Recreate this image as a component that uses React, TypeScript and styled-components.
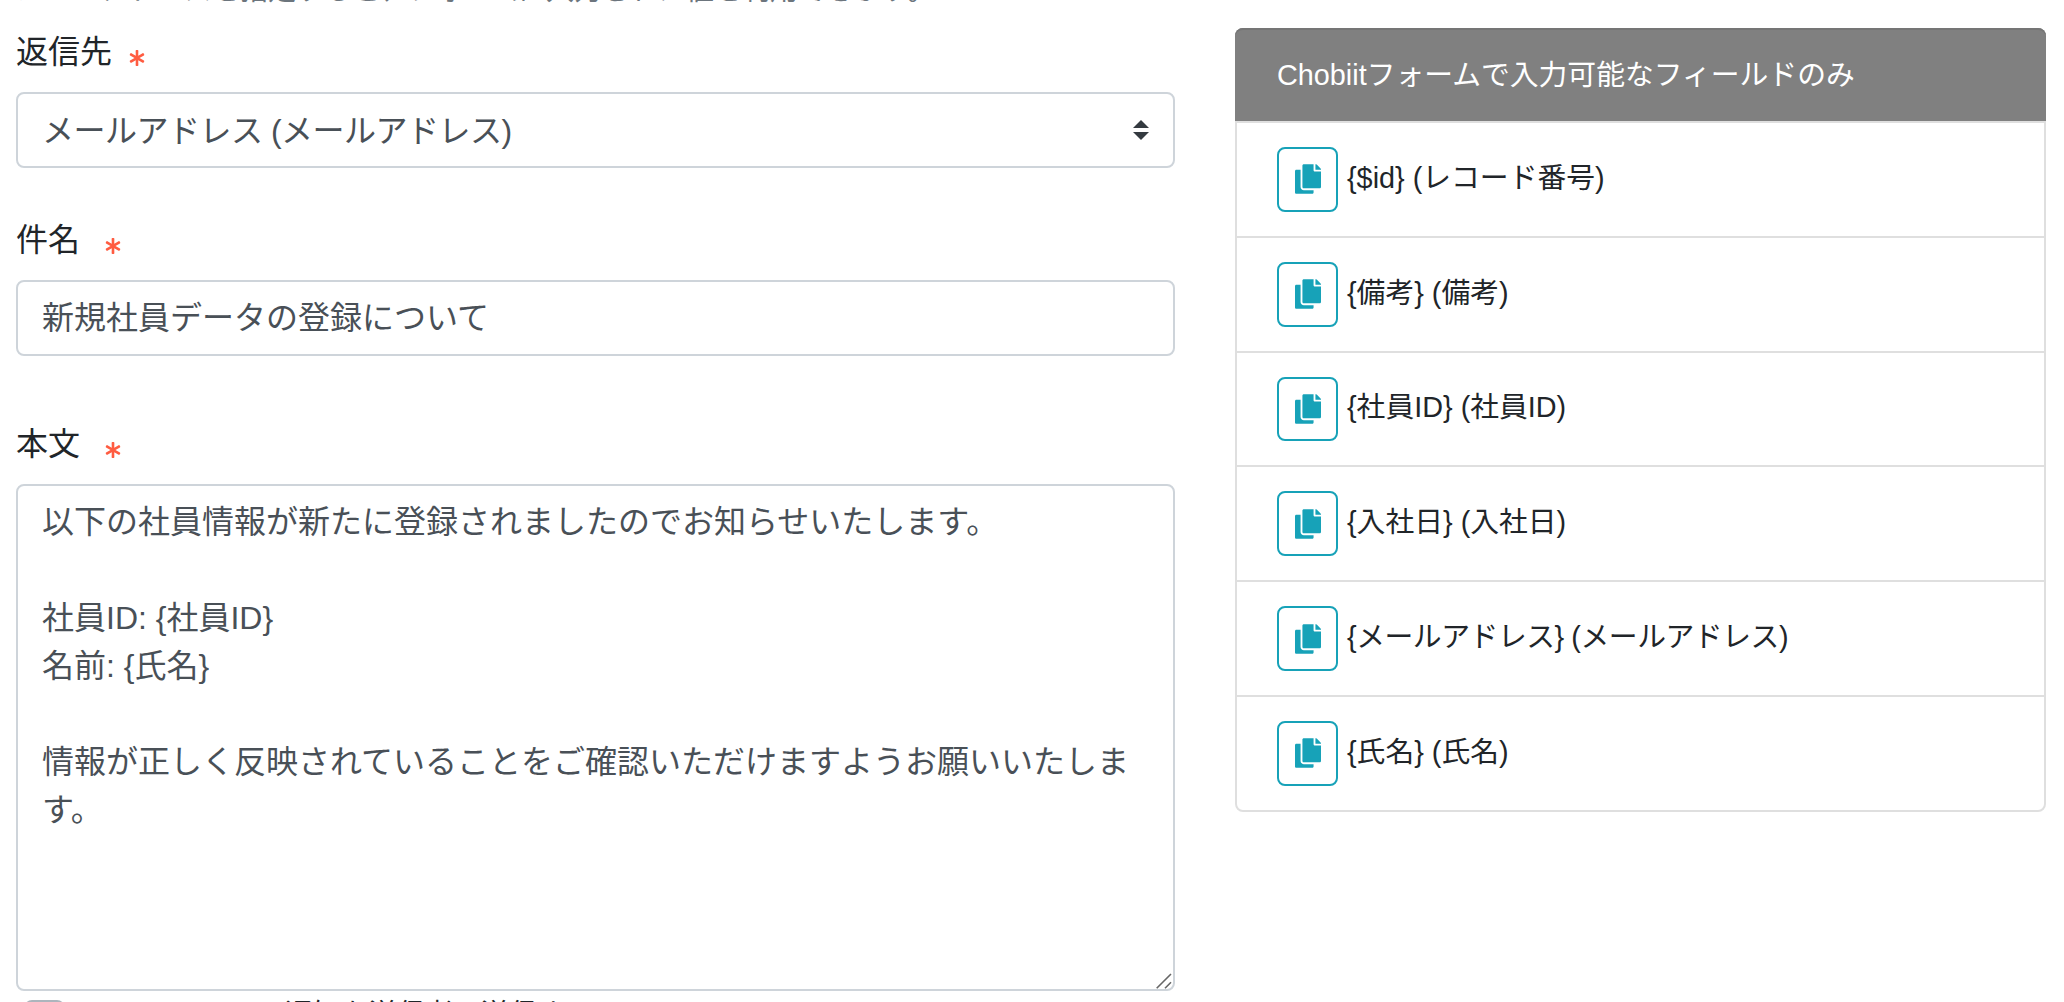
import React from 'react';
import styled, { createGlobalStyle } from 'styled-components';
import { FaAsterisk, FaCopy } from 'react-icons/fa';

const FONT = '"Liberation Sans", "Noto Sans CJK JP", sans-serif';
const SELECT_ARROWS =
  "url(\"data:image/svg+xml,%3csvg xmlns='http://www.w3.org/2000/svg' viewBox='0 0 4 5'%3e%3cpath fill='%23343a40' d='M2 0L0 2h4zm0 5L0 3h4z'/%3e%3c/svg%3e\")";

const BODY_TEXT = `以下の社員情報が新たに登録されましたのでお知らせいたします。

社員ID: {社員ID}
名前: {氏名}

情報が正しく反映されていることをご確認いただけますようお願いいたします。`;

const FIELDS = [
  { text: '{$id} (レコード番号)', tight: false },
  { text: '{備考} (備考)', tight: false },
  { text: '{社員ID} (社員ID)', tight: false },
  { text: '{入社日} (入社日)', tight: false },
  { text: '{メールアドレス} (メールアドレス)', tight: true },
  { text: '{氏名} (氏名)', tight: false },
];

const GlobalStyle = createGlobalStyle`
  html, body {
    margin: 0;
    height: 100%;
    overflow: hidden;
    background: #fff;
  }
  body {
    font-family: ${FONT};
    color: #212529;
  }
  * {
    box-sizing: border-box;
  }
`;

const Page = styled.div`
  display: grid;
  grid-template-columns: 1159px 811px;
  column-gap: 60px;
  align-items: start;
  height: 1002px;
  padding: 0 18px 0 16px;
  overflow: hidden;
`;

const FormColumn = styled.div`
  display: flex;
  flex-direction: column;
  margin-top: -30px;
`;

const Hint = styled.p`
  margin: 0 0 16px;
  font-size: 28px;
  line-height: 42px;
  color: #6c757d;
`;

const Label = styled.label<{ $gap: number }>`
  display: flex;
  height: 48px;
  margin-bottom: 16px;
  font-size: 32px;
  line-height: 48px;
  color: #212529;

  svg {
    margin: 22px 0 0 ${(p) => p.$gap}px;
    width: 16px;
    height: 16px;
    color: #ff5c41;
  }
`;

const Select = styled.select<{ $after: number }>`
  display: block;
  width: 100%;
  height: 76px;
  margin-bottom: ${(p) => p.$after}px;
  padding: 13px 64px 11px 24px;
  border: 2px solid #ced4da;
  border-radius: 8px;
  appearance: none;
  background: #fff ${SELECT_ARROWS} no-repeat right 24px center / 16px 20px;
  font-family: ${FONT};
  font-size: 32px;
  line-height: 48px;
  letter-spacing: -0.5px;
  color: #495057;
`;

const TextInput = styled.input<{ $after: number }>`
  display: block;
  width: 100%;
  height: 76px;
  margin-bottom: ${(p) => p.$after}px;
  padding: 9px 24px 15px;
  border: 2px solid #ced4da;
  border-radius: 8px;
  font-family: ${FONT};
  font-size: 32px;
  line-height: 48px;
  color: #495057;
`;

const AreaWrap = styled.div`
  position: relative;
  height: 507px;
`;

const BodyArea = styled.textarea`
  display: block;
  width: 100%;
  height: 100%;
  padding: 12px 24px;
  border: 2px solid #ced4da;
  border-radius: 8px;
  resize: none;
  font-family: ${FONT};
  font-size: 32px;
  line-height: 48px;
  color: #495057;
`;

const ResizeGrip = styled.svg`
  position: absolute;
  right: 0;
  bottom: 0;
  width: 20px;
  height: 20px;
  pointer-events: none;
`;

const OptionRow = styled.div`
  display: flex;
  align-items: flex-start;
  margin: 9px 0 0 8px;
`;

const SwitchTrack = styled.span`
  flex: none;
  width: 41px;
  height: 24px;
  border-radius: 8px;
  background: #adb5bd;
`;

const OptionText = styled.span`
  margin: 1px 0 0 220px;
  font-size: 28px;
  line-height: 28px;
  color: #212529;
`;

const Card = styled.section`
  margin-top: 28px;
  border: 2px solid #dfdfdf;
  border-radius: 8px;
  background: #fff;
`;

const CardHeader = styled.header`
  margin: -2px -2px 0;
  padding: 26px 42px 23.8px;
  border-radius: 8px 8px 0 0;
  background: #808080;
  box-shadow: inset 0 2px 0 #757575;
  font-size: 28.8px;
  line-height: 43.2px;
  color: #fff;
`;

const FieldRow = styled.div`
  display: flex;
  align-items: center;
  gap: 9px;
  padding: 24px 40px;
  border-top: 2px solid #dfdfdf;
`;

const FieldName = styled.span<{ $tight: boolean }>`
  margin-bottom: 2px;
  font-size: 28.8px;
  line-height: 43.2px;
  letter-spacing: ${(p) => (p.$tight ? '-0.45px' : '0')};
  color: #212529;
`;

const CopyButton = styled.button`
  flex: none;
  display: flex;
  align-items: center;
  justify-content: center;
  width: 61px;
  height: 64.8px;
  padding: 0;
  border: 2px solid #17a2b8;
  border-radius: 8px;
  background: #fff;
  color: #17a2b8;

  svg {
    width: 26px;
    height: 30px;
  }
`;

export default function App() {
  return (
    <>
      <GlobalStyle />
      <Page>
        <FormColumn>
          <Hint>メールアドレスを指定すると、フォームに入力された値を利用できます。</Hint>

          <Label $gap={17}>
            返信先
            <FaAsterisk />
          </Label>
          <Select $after={48} defaultValue="email">
            <option value="email">メールアドレス (メールアドレス)</option>
          </Select>

          <Label $gap={25}>
            件名
            <FaAsterisk />
          </Label>
          <TextInput $after={64} defaultValue="新規社員データの登録について" />

          <Label $gap={25}>
            本文
            <FaAsterisk />
          </Label>
          <AreaWrap>
            <BodyArea defaultValue={BODY_TEXT} />
            <ResizeGrip viewBox="0 0 20 20" aria-hidden="true">
              <path d="M1.7 17.3L16 3M10 17.3l6-6" stroke="#666" strokeWidth="1.6" fill="none" />
            </ResizeGrip>
          </AreaWrap>

          <OptionRow>
            <SwitchTrack />
            <OptionText>通知を送信者へ送信する</OptionText>
          </OptionRow>
        </FormColumn>

        <Card>
          <CardHeader>Chobiitフォームで入力可能なフィールドのみ</CardHeader>
          {FIELDS.map((field) => (
            <FieldRow key={field.text}>
              <CopyButton type="button">
                <FaCopy />
              </CopyButton>
              <FieldName $tight={field.tight}>{field.text}</FieldName>
            </FieldRow>
          ))}
        </Card>
      </Page>
    </>
  );
}
